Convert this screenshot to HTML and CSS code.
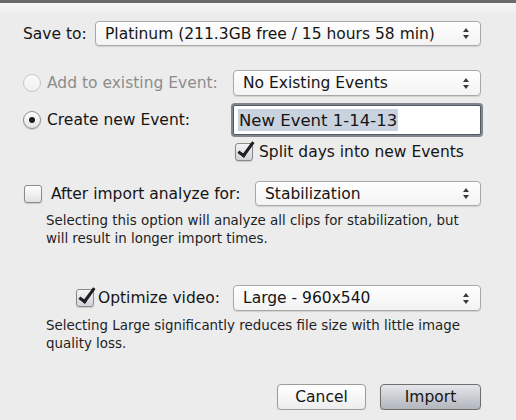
FILE: index.html
```html
<!DOCTYPE html>
<html lang="en">
<head>
    <meta charset="UTF-8">
    <title>Import</title>
    <link rel="stylesheet" href="styles.css">
</head>
<body>
    <div class="topbar"></div>
    <div class="dialog">
        <div class="row row-save">
            <span class="label save-label">Save to:</span>
            <div class="popup"><span>Platinum (211.3GB free / 15 hours 58 min)</span><span class="arrows"></span></div>
        </div>

        <div class="row row-existing">
            <div class="left event-left">
                <span class="radio disabled"></span>
                <span class="label muted">Add to existing Event:</span>
            </div>
            <div class="popup"><span>No Existing Events</span><span class="arrows"></span></div>
        </div>

        <div class="row row-new">
            <div class="left event-left">
                <span class="radio checked"></span>
                <span class="label">Create new Event:</span>
            </div>
            <div class="field"><span class="selected">New Event 1-14-13</span></div>
        </div>

        <div class="row row-split">
            <span class="check checked"></span>
            <span class="label">Split days into new Events</span>
        </div>

        <div class="row row-analyze">
            <div class="left analyze-left">
                <span class="check"></span>
                <span class="label">After import analyze for:</span>
            </div>
            <div class="popup"><span>Stabilization</span><span class="arrows"></span></div>
        </div>
        <p class="desc">Selecting this option will analyze all clips for stabilization, but will result in longer import times.</p>

        <div class="row row-optimize">
            <div class="left optimize-left">
                <span class="check checked"></span>
                <span class="label">Optimize video:</span>
            </div>
            <div class="popup"><span>Large - 960x540</span><span class="arrows"></span></div>
        </div>
        <p class="desc">Selecting Large significantly reduces file size with little image quality loss.</p>

        <div class="buttons">
            <button class="btn cancel">Cancel</button>
            <button class="btn import">Import</button>
        </div>
    </div>
</body>
</html>
```

FILE: styles.css
```css
body {
    margin: 0;
    background-color: #ececec;
    font-family: "DejaVu Sans", Verdana, sans-serif;
    font-size: 15.5px;
    color: #151515;
}
.topbar {
    height: 12px;
    border-top: 3px solid #6a6a6a;
    background: linear-gradient(#f6f6f6, #ececec);
}
.dialog {
    padding: 0 35px 0 23px;
}
.row {
    display: flex;
    align-items: center;
}
.left {
    display: flex;
    align-items: center;
    flex: none;
}
.row-save {
    margin-top: 6px;
    height: 25px;
}
.save-label {
    width: 72px;
    flex: none;
}
.row-existing {
    margin-top: 24px;
    height: 26px;
}
.row-new {
    margin-top: 9px;
    height: 30px;
}
.event-left {
    width: 210px;
}
.row-split {
    margin-top: 8px;
    height: 18px;
    padding-left: 212px;
}
.row-split .check {
    margin-right: 6px;
}
.row-analyze {
    margin-top: 20px;
    height: 25px;
}
.analyze-left {
    width: 231px;
    padding-left: 1px;
}
.analyze-left .check {
    margin-right: 9px;
}
.row-optimize {
    margin-top: 37px;
    height: 26px;
}
.optimize-left {
    width: 157px;
    padding-left: 53px;
}
.optimize-left .check {
    margin-right: 4px;
}
.label.muted {
    color: #8c8c8c;
}
.desc {
    margin: 6px 0 0 23px;
    font-size: 13.4px;
    line-height: 18px;
    color: #1e1e1e;
    max-width: 425px;
}
.popup {
    flex: 1;
    height: 100%;
    box-sizing: border-box;
    display: flex;
    align-items: center;
    justify-content: space-between;
    padding: 0 10px 0 9px;
    background: linear-gradient(#ffffff, #f3f3f3);
    border: 1px solid #a9a9a9;
    border-radius: 4px;
    box-shadow: 0 1px 1px rgba(0, 0, 0, 0.12);
}
.arrows {
    position: relative;
    width: 7px;
    height: 11px;
}
.arrows::before,
.arrows::after {
    content: "";
    position: absolute;
    left: 0;
    border-left: 3.5px solid transparent;
    border-right: 3.5px solid transparent;
}
.arrows::before {
    top: 0;
    border-bottom: 4px solid #3a3a3a;
}
.arrows::after {
    bottom: 0;
    border-top: 4px solid #3a3a3a;
}
.field {
    flex: 1;
    height: 100%;
    box-sizing: border-box;
    display: flex;
    align-items: stretch;
    padding: 3px 4px;
    font-size: 16.5px;
    background-color: #fff;
    border: 1px solid #555a60;
    border-radius: 2px;
    box-shadow: 0 0 0 2px #80868d;
}
.selected {
    display: flex;
    align-items: center;
    padding: 0 1px;
    background-color: #c9d3df;
}
.radio {
    width: 16px;
    height: 16px;
    margin-right: 6px;
    border: 1px solid #8e8e8e;
    border-radius: 50%;
    background: linear-gradient(#ffffff, #e4e4e4);
    box-shadow: 0 1px 1px rgba(0, 0, 0, 0.15);
    position: relative;
}
.radio.disabled {
    border-color: #c6c6c6;
    background: linear-gradient(#fafafa, #f0f0f0);
    box-shadow: none;
}
.radio.checked::after {
    content: "";
    position: absolute;
    left: 5px;
    top: 5px;
    width: 6px;
    height: 6px;
    border-radius: 50%;
    background-color: #1c1c1c;
}
.check {
    width: 16px;
    height: 16px;
    flex: none;
    border: 1px solid #8a8a8a;
    border-radius: 3px;
    background: linear-gradient(#ffffff, #e2e2e2);
    box-shadow: 0 1px 1px rgba(0, 0, 0, 0.15);
    position: relative;
}
.check.checked {
    background: linear-gradient(#f4f4f6, #cfd2d8);
}
.check.checked::after {
    content: "";
    position: absolute;
    left: 6px;
    top: -5px;
    width: 5px;
    height: 15px;
    border-right: 3px solid #1e1e1e;
    border-bottom: 3px solid #1e1e1e;
    transform: rotate(36deg);
    transform-origin: center;
}
.buttons {
    display: flex;
    justify-content: flex-end;
    gap: 14px;
    margin-top: 31px;
}
.btn {
    height: 26px;
    font-family: inherit;
    font-size: 15.5px;
    color: #151515;
    border-radius: 4px;
    padding: 0;
}
.cancel {
    width: 89px;
    border: 1px solid #9c9c9c;
    background: linear-gradient(#ffffff, #ededed);
    box-shadow: 0 1px 1px rgba(0, 0, 0, 0.12);
}
.import {
    width: 101px;
    border: 1px solid #6f6f6f;
    background: linear-gradient(#e4e6ea, #b2b6bd);
    box-shadow: 0 1px 1px rgba(0, 0, 0, 0.2);
}
```
